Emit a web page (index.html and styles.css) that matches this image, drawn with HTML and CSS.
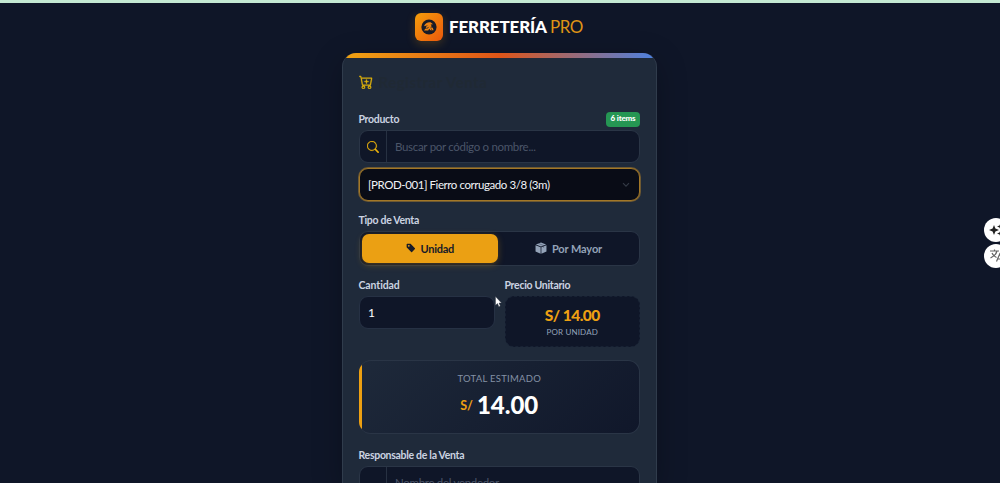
FILE: index.html
```html
<!DOCTYPE html>
<html lang="es">
<head>
<meta charset="utf-8">
<title>Ferretería Pro</title>
<link rel="stylesheet" href="styles.css">
</head>
<body>
<header class="brand">
  <span class="logo"><svg width="16" height="16" viewBox="0 0 16 16"><circle cx="8" cy="8" r="7.6" fill="#171b28"/><path d="M3 7.200C4 4.500 7 2.800 9.500 3.300L12 5.200 9.600 5.400 10.800 7.200 9 8.200 11.800 8.700 12.600 11.300H9.400L8.200 9.800 7.200 11.600 3 11.500 4.300 9.700 5.800 9.200 4.700 8.100 7 6.300Z" fill="#ee8413"/><path d="m5.800 9.800 1.800-1.900M9.800 9.700l1 .8" stroke="#171b28" stroke-width=".9"/></svg></span>
  <h1 class="name"><span class="name-main">FERRETERÍA</span> <span class="name-pro">PRO</span></h1>
</header>
<main class="card">
  <div class="strip"></div>
  <div class="body">
    <div class="title-row">
      <svg width="14" height="14" viewBox="0 0 16 16" fill="#e5b70c" stroke="#e5b70c" stroke-width=".4"><path d="M9 5.5a.5.5 0 0 0-1 0V7H6.500a.5.5 0 0 0 0 1H8v1.500a.5.5 0 0 0 1 0V8h1.500a.5.5 0 0 0 0-1H9z"/><path d="M.5 1a.5.5 0 0 0 0 1h1.110l.401 1.607 1.498 7.985A.5.5 0 0 0 4 12h1a2 2 0 1 0 0 4 2 2 0 0 0 0-4h7a2 2 0 1 0 0 4 2 2 0 0 0 0-4h1a.5.5 0 0 0 .491-.408l1.500-8A.5.5 0 0 0 14.500 3H2.890l-.405-1.621A.5.5 0 0 0 2 1zm3.915 10L3.102 4h10.796l-1.313 7zM6 14a1 1 0 1 1-2 0 1 1 0 0 1 2 0m7 0a1 1 0 1 1-2 0 1 1 0 0 1 2 0"/></svg>
      <h2 class="title">Registrar Venta</h2>
    </div>
    <div class="label-row"><label class="label l-producto">Producto</label><span class="badge">6 items</span></div>
    <div class="group search">
      <span class="addon"><svg width="12" height="12" viewBox="0 0 16 16" fill="#eab20d" stroke="#eab20d" stroke-width=".4"><path d="M11.742 10.344a6.500 6.500 0 1 0-1.397 1.398l3.850 3.850a1 1 0 0 0 1.415-1.414zM12 6.500a5.500 5.500 0 1 1-11 0 5.500 5.500 0 0 1 11 0"/></svg></span>
      <span class="placeholder">Buscar por código o nombre...</span>
    </div>
    <div class="select"><span class="select-text">[PROD-001] Fierro corrugado 3/8 (3m)</span>
      <svg width="8" height="6" viewBox="0 0 8 6"><path d="m1 1.200 3 3 3-3" fill="none" stroke="#343b46" stroke-width="1.100"/></svg></div>
    <label class="label l-tipo">Tipo de Venta</label>
    <div class="toggle">
      <div class="option active"><svg width="10" height="10" viewBox="0 0 16 16" fill="#171b28"><path d="M2 1a1 1 0 0 0-1 1v4.586a1 1 0 0 0 .293.707l7 7a1 1 0 0 0 1.414 0l4.586-4.586a1 1 0 0 0 0-1.414l-7-7A1 1 0 0 0 6.586 1zm4 3.500a1.500 1.500 0 1 1-3 0 1.500 1.500 0 0 1 3 0"/></svg><span class="t-unidad">Unidad</span></div>
      <div class="option"><svg width="12" height="12" viewBox="0 0 16 16" fill="#94a3b8"><path d="m8 .5 6.800 2.700L8 6 1.200 3.200zM.7 4.200 7.500 7v8.500L.7 12.700zM15.300 4.200 8.500 7v8.500l6.800-2.800z"/><path d="m4.500 1.900 7 2.800v3" fill="none" stroke="#30394e" stroke-width=".6"/></svg><span class="t-mayor">Por Mayor</span></div>
    </div>
    <div class="columns">
      <div><label class="label l-cantidad">Cantidad</label><div class="quantity">1</div></div>
      <div><label class="label l-precio">Precio Unitario</label>
        <div class="price"><span class="amount">S/ 14.00</span><span class="unit">POR UNIDAD</span></div></div>
    </div>
    <section class="total">
      <div class="accent"></div>
      <div class="total-content"><span class="total-label">TOTAL ESTIMADO</span>
      <div class="total-value"><span class="currency">S/</span><span class="number">14.00</span></div></div>
    </section>
    <label class="label l-resp">Responsable de la Venta</label>
    <div class="group seller"><span class="addon"></span><span class="placeholder">Nombre del vendedor</span></div>
  </div>
</main>
<svg class="cursor" width="7" height="12" viewBox="0 0 7 12"><path d="M.5.500v8.800l2-1.800 1.400 3.200 1.400-.7-1.300-3H6.500z" fill="#fff" stroke="#303642" stroke-width=".4"/></svg>
<aside class="tools">
  <span class="tool"><svg width="18" height="18" viewBox="0 0 18 18" fill="#222"><path d="M7 4 8.400 7.600 12 9 8.400 10.400 7 14 5.600 10.400 2 9 5.600 7.600zM13.500 2l1 2.500 2.500 1-2.500 1-1 2.500-1-2.500-2.500-1 2.500-1zM13.500 9l1 2.500 2.500 1-2.500 1-1 2.500-1-2.500-2.500-1 2.500-1z"/></svg></span>
  <span class="tool"><svg width="18" height="18" viewBox="0 0 18 18" fill="none" stroke="#626262" stroke-width="1.200"><path d="M3 4h9M7.500 2.500V4M10 4C9.300 7 7 9.300 3.500 11M5 6c1 2 2.500 3.500 4.500 4.500M9.500 14.500l3.200-7.500 3.200 7.500M10.700 12h4"/></svg></span>
</aside>
</body>
</html>
```
FILE: styles.css
```css
* { box-sizing: border-box; }
html { overflow: hidden; }
body {
  margin: 0;
  height: 483px;
  overflow: hidden;
  position: relative;
  background: #0f1628;
  border-top: 3px solid #bcdcca;
  border-image: linear-gradient(#c4e8d3 60%, #78908c) 3;
  border-width: 3px 0 0;
  font-family: Lato, "Open Sans", sans-serif;
  color: #fff;
}
h1, h2 { margin: 0; }
svg { display: block; flex: none; }

.brand { display: flex; align-items: center; height: 50px; padding: 0 0 3px 415px; gap: 7px; }
.logo {
  width: 28px; height: 28px; border-radius: 6px;
  display: grid; place-items: center;
  background: linear-gradient(135deg, #f59e0b, #ea580c);
  box-shadow: 0 3px 10px rgba(245, 158, 11, .22);
}
.name { display: flex; gap: 3px; margin-left: -1px; font-size: 17px; line-height: 20px; white-space: nowrap; }
.name-main { width: 98px; font-weight: 900; letter-spacing: -.15px; }
.name-pro { font-weight: 400; color: #df9316; letter-spacing: -.5px; }

.card {
  width: 315px; height: 430px; margin-left: 342px;
  border: 1px solid #303c4c; border-width: 0 1px;
  border-radius: 14px 14px 0 0;
  background: #1f2a3a; overflow: hidden;
  box-shadow: 0 8px 30px rgba(0, 0, 0, .25);
}
.strip { height: 5px; background: linear-gradient(90deg, #f0a312, #df5518 50%, #4c82e2); }
.body { padding: 16px 16px 0 15.500px; }
.title-row { display: flex; align-items: center; gap: 6px; height: 16px; margin-bottom: 22px; }
.title { font-size: 15px; font-weight: 700; line-height: 16px; letter-spacing: .5px; color: #1f2934; }

.label { display: block; font-size: 10.500px; font-weight: 700; line-height: 14px; letter-spacing: -.3px; color: #cbd3e1; white-space: nowrap; }
.l-cantidad { letter-spacing: -.1px; }
.label-row { display: flex; justify-content: space-between; align-items: center; height: 15px; margin-bottom: 3px; }
.l-producto { margin-top: -1px; }
.l-resp { margin-top: -1px; }
.badge {
  width: 34px; height: 15px; border-radius: 4px;
  background: #259653; text-align: center;
  font-size: 8px; font-weight: 900; line-height: 13px; letter-spacing: -.2px;
}
.group { display: flex; height: 33px; border: 1px solid #2a3546; border-radius: 9px; background: #0f1628; overflow: hidden; }
.addon { width: 27px; border-right: 1px solid #273142; display: grid; place-items: center; }
.placeholder { padding-left: 8.500px; font-size: 11.500px; line-height: 31px; letter-spacing: -.31px; color: #4b5568; white-space: nowrap; }
.select {
  display: flex; align-items: center; justify-content: space-between;
  height: 33px; margin: 5px 0 12px; padding: 0 9px 0 8.500px;
  border: 1px solid #a37827; border-radius: 9px; background: #090c16;
  box-shadow: 0 0 0 1px #6e5932;
}
.select-text { font-size: 11.500px; letter-spacing: -.43px; color: #f1f3f7; white-space: nowrap; }
.toggle {
  display: grid; grid-template-columns: 136.500px 1fr; gap: 4px;
  height: 35px; padding: 2px; margin: 4px 0 12px;
  border: 1px solid #2a3546; border-radius: 9px; background: #0f1628;
}
.option { display: flex; align-items: center; justify-content: center; gap: 5px; border-radius: 7px; font-size: 11px; font-weight: 700; letter-spacing: -.3px; color: #94a3b8; white-space: nowrap; }
.option svg { margin-top: -1px; }
.t-mayor { letter-spacing: -.1px; margin-right: 2px; }
.active { background: #eba013; color: #171b28; box-shadow: 0 2px 7px rgba(235, 160, 19, .28); }
.columns { display: grid; grid-template-columns: 136px 135.500px; justify-content: space-between; }
.quantity { height: 33px; margin-top: 4px; padding-left: 8.500px; border: 1px solid #263144; border-radius: 9px; background: #0f1628; font-size: 12px; line-height: 31px; }
.price {
  display: flex; flex-direction: column; align-items: center;
  height: 51px; margin-top: 4px; padding-top: 9px;
  border: 1px dashed #182234; border-radius: 9px; background: #0f1628;
}
.amount { font-size: 15.500px; font-weight: 900; line-height: 18px; letter-spacing: -.5px; color: #eda012; }
.unit { font-size: 8px; line-height: 16px; letter-spacing: .15px; color: #94a3b8; white-space: nowrap; }
.total {
  height: 74px; margin: 13px 0 15px;
  display: grid; grid-template-columns: 3px 1fr;
  border: 1px solid #2a3546; border-left: 0; border-radius: 12px;
  background: linear-gradient(135deg, #1e293a, #10172a); overflow: hidden;
}
.accent { background: #eda012; }
.total-content { display: flex; flex-direction: column; align-items: center; padding-top: 11px; padding-right: 2px; }
.total-label { font-size: 9.500px; line-height: 14px; letter-spacing: .25px; color: #8491a5; white-space: nowrap; }
.total-value { display: flex; align-items: center; gap: 4px; height: 38px; }
.currency { font-size: 12.500px; font-weight: 700; color: #eda012; }
.number { font-size: 24px; font-weight: 900; line-height: 30px; }
.seller { margin-top: 4px; }

.cursor { position: absolute; left: 495px; top: 293px; }
.tools { position: absolute; left: 983.500px; top: 215px; display: grid; gap: 2px; }
.tool { width: 24px; height: 24px; border-radius: 50%; background: #fff; display: grid; place-items: center; }
```
